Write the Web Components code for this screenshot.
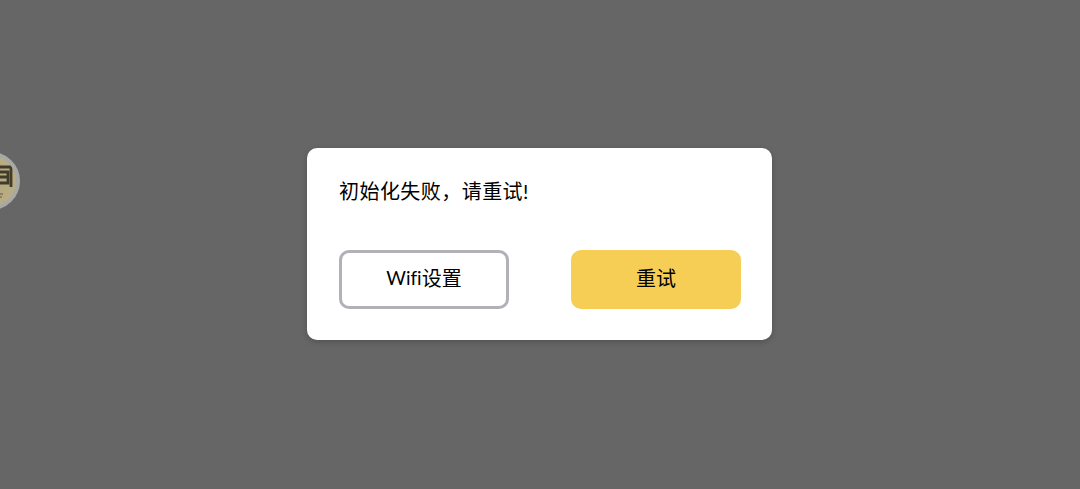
<!DOCTYPE html>
<html lang="zh">
<head>
<meta charset="utf-8">
<style>
  html, body { margin: 0; height: 100%; overflow: hidden; }
  body {
    background: #666;
    font-family: Lato, "Noto Sans CJK SC", sans-serif;
    color: #000;
  }
  .latin { font-size: 19px; font-variant-ligatures: none; }
</style>
</head>
<body>
<float-ball></float-ball>
<app-overlay>
  <alert-dialog>
    <span slot="message">初始化失败，请重试!</span>
    <dialog-button variant="outline"><span class="latin">Wifi</span>设置</dialog-button>
    <dialog-button variant="primary">重试</dialog-button>
  </alert-dialog>
</app-overlay>

<script>
class AppOverlay extends HTMLElement {
  constructor() {
    super();
    this.attachShadow({ mode: 'open' });
    this.shadowRoot.innerHTML = `
      <style>
        :host {
          display: flex;
          justify-content: center;
          height: 489px;
          padding: 148px 1px 0 0;
          box-sizing: border-box;
        }
      </style>
      <slot></slot>
    `;
  }
}

class AlertDialog extends HTMLElement {
  constructor() {
    super();
    this.attachShadow({ mode: 'open' });
    this.shadowRoot.innerHTML = `
      <style>
        :host {
          display: block;
          box-sizing: border-box;
          width: 465px;
          height: 192px;
          padding: 29px 31px 31px 32px;
          background: #fff;
          border-radius: 10px;
          box-shadow: 0 2px 6px rgba(0, 0, 0, 0.2);
        }
        .message {
          height: 73px;
          font-size: 20px;
          line-height: 29px;
          letter-spacing: 0.45px;
        }
        .actions {
          display: flex;
          justify-content: space-between;
        }
      </style>
      <div class="message"><slot name="message"></slot></div>
      <div class="actions"><slot></slot></div>
    `;
  }
}

class DialogButton extends HTMLElement {
  constructor() {
    super();
    this.attachShadow({ mode: 'open' });
    this.shadowRoot.innerHTML = `
      <style>
        :host {
          display: flex;
          align-items: center;
          justify-content: center;
          box-sizing: border-box;
          width: 170px;
          height: 59px;
          padding-bottom: 5px;
          border-radius: 10px;
          font-size: 20px;
        }
        :host([variant="outline"]) {
          border: 3px solid #b1b1b8;
          background: #fff;
        }
        :host([variant="primary"]) {
          background: #f7ce55;
        }
      </style>
      <slot></slot>
    `;
  }
}

class FloatBall extends HTMLElement {
  constructor() {
    super();
    this.attachShadow({ mode: 'open' });
    this.shadowRoot.innerHTML = `
      <style>
        :host {
          position: absolute;
          left: -38px;
          top: 152px;
          width: 58px;
          height: 58px;
          box-sizing: border-box;
          border-radius: 50%;
          border: 4px solid #a8a8a4;
          background: radial-gradient(circle, #b3a67c 0%, #b9ad85 70%, #c6bd9e 100%);
          overflow: hidden;
        }
        svg { display: block; width: 100%; height: 100%; filter: blur(0.5px); }
      </style>
      <svg viewBox="0 0 50 50" fill="none" stroke="#403b2b" stroke-width="2.8">
        <path d="M20 11H45V31"/>
        <path d="M20 16H42V27H20M20 21H42"/>
        <path d="M34 38H37M34 41H36" stroke="#7d7557" stroke-width="1.6"/>
      </svg>
    `;
  }
}

customElements.define('app-overlay', AppOverlay);
customElements.define('alert-dialog', AlertDialog);
customElements.define('dialog-button', DialogButton);
customElements.define('float-ball', FloatBall);
</script>
</body>
</html>
